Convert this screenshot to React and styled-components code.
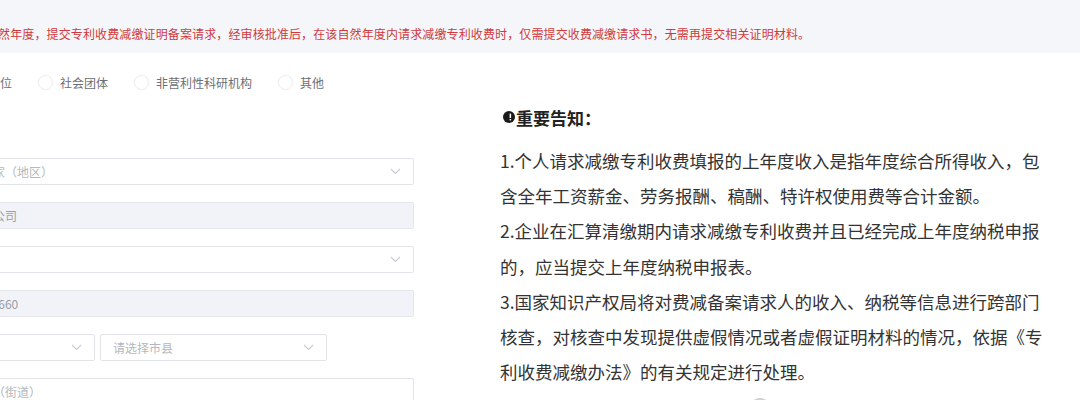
import React from "react";
import styled, { createGlobalStyle } from "styled-components";

const GlobalStyle = createGlobalStyle`
  html, body {
    margin: 0;
    padding: 0;
    background: #ffffff;
  }
  body {
    font-family: "Noto Sans CJK SC", "Noto Sans", sans-serif;
  }
`;

const Page = styled.div`
  width: 1080px;
  height: 400px;
  overflow: hidden;
  background: #ffffff;
`;

const TipBar = styled.div`
  height: 53px;
  background: #f5f6f9;
  display: flex;
  align-items: center;
  white-space: nowrap;
  overflow: hidden;
`;

const TipText = styled.p`
  margin: 0 0 0 -14px;
  padding-top: 14px;
  font-size: 12px;
  letter-spacing: 0.12px;
  color: #cf3b3d;
  line-height: 1;
`;

const Content = styled.div`
  display: flex;
  align-items: flex-start;
`;

const Form = styled.div`
  flex: none;
  width: 482px;
  margin-left: -68px;
  padding-top: 19px;
  display: flex;
  flex-direction: column;
`;

const RadioRow = styled.div`
  display: flex;
  align-items: center;
  height: 20px;
  padding-left: 10px;
  margin-bottom: 66px;
`;

const RadioItem = styled.label`
  display: flex;
  align-items: center;
  margin-right: 26px;
  font-size: 12px;
  color: #6c7076;
  white-space: nowrap;
`;

const RadioDot = styled.span`
  width: 13px;
  height: 13px;
  border-radius: 50%;
  border: 1px solid #eceef2;
  box-shadow: 0 0 2px rgba(0, 0, 0, 0.05);
  background: #ffffff;
  margin-right: 7px;
  flex: none;
`;

const Fields = styled.div`
  display: flex;
  flex-direction: column;
  gap: 17px;
`;

const FieldLine = styled.div`
  display: flex;
  gap: 5px;
`;

const Box = styled.div`
  box-sizing: border-box;
  height: 27px;
  width: ${({ $w }) => ($w ? `${$w}px` : "100%")};
  display: flex;
  align-items: center;
  justify-content: space-between;
  padding: 0 12px;
  border: 1px solid ${({ $disabled }) => ($disabled ? "#e6e8ee" : "#e2e4e9")};
  border-radius: 2px;
  background: ${({ $disabled }) => ($disabled ? "#f1f3f8" : "#ffffff")};
  font-size: 12px;
  color: ${({ $disabled }) => ($disabled ? "#9a9ca2" : "#b4b7bd")};
  white-space: nowrap;
  overflow: hidden;
`;

const Chevron = () => (
  <svg width="11" height="7" viewBox="0 0 11 7" fill="none">
    <polyline points="1,1 5.5,5.5 10,1" stroke="#c9ccd3" strokeWidth="1.2" />
  </svg>
);

const Notice = styled.div`
  flex: none;
  width: 550px;
  margin-left: 86px;
  padding-top: 52px;
  color: #333333;
`;

const NoticeTitle = styled.div`
  display: flex;
  align-items: center;
  height: 24px;
  font-size: 17px;
  font-weight: 700;
  color: #222222;
  margin-bottom: 14px;
  margin-left: 3px;
`;

const Mark = styled.svg`
  flex: none;
  margin-right: 1px;
`;

const NoticeBody = styled.div`
  font-size: 17.5px;
  line-height: 35.2px;
`;

const Para = styled.p`
  margin: 0;
`;

const Footer = styled.div`
  display: flex;
  justify-content: center;
  padding-right: 30px;
  margin-top: 9px;
`;

const GreyDot = styled.span`
  width: 20px;
  height: 20px;
  border-radius: 50%;
  background: #cfd0d2;
`;

const radios = ["事业单位", "社会团体", "非营利性科研机构", "其他"];

export default function App() {
  return (
    <Page>
      <GlobalStyle />
      <TipBar>
        <TipText>
          自然年度，提交专利收费减缴证明备案请求，经审核批准后，在该自然年度内请求减缴专利收费时，仅需提交收费减缴请求书，无需再提交相关证明材料。
        </TipText>
      </TipBar>
      <Content>
        <Form>
          <RadioRow>
            {radios.map((r) => (
              <RadioItem key={r}>
                <RadioDot />
                {r}
              </RadioItem>
            ))}
          </RadioRow>
          <Fields>
            <Box>
              <span>请选择国家（地区）</span>
              <Chevron />
            </Box>
            <Box $disabled>
              <span>某某有限公司</span>
            </Box>
            <Box>
              <span />
              <Chevron />
            </Box>
            <Box $disabled>
              <span>13812345660</span>
            </Box>
            <FieldLine>
              <Box $w={163}>
                <span />
                <Chevron />
              </Box>
              <Box $w={227}>
                <span>请选择市县</span>
                <Chevron />
              </Box>
            </FieldLine>
            <Box>
              <span>具体地址（街道）</span>
            </Box>
          </Fields>
        </Form>
        <Notice>
          <NoticeTitle>
            <Mark width="12" height="12" viewBox="0 0 12 12">
              <circle cx="6" cy="6" r="6" fill="#1a1a1a" />
              <rect x="6.6" y="2.6" width="1.5" height="4.4" fill="#ffffff" />
              <rect x="6.6" y="8" width="1.5" height="1.4" fill="#ffffff" />
            </Mark>
            重要告知：
          </NoticeTitle>
          <NoticeBody>
            <Para>
              1.个人请求减缴专利收费填报的上年度收入是指年度综合所得收入，包含全年工资薪金、劳务报酬、稿酬、特许权使用费等合计金额。
            </Para>
            <Para>
              2.企业在汇算清缴期内请求减缴专利收费并且已经完成上年度纳税申报的，应当提交上年度纳税申报表。
            </Para>
            <Para>
              3.国家知识产权局将对费减备案请求人的收入、纳税等信息进行跨部门核查，对核查中发现提供虚假情况或者虚假证明材料的情况，依据《专利收费减缴办法》的有关规定进行处理。
            </Para>
          </NoticeBody>
          <Footer>
            <GreyDot />
          </Footer>
        </Notice>
      </Content>
    </Page>
  );
}
